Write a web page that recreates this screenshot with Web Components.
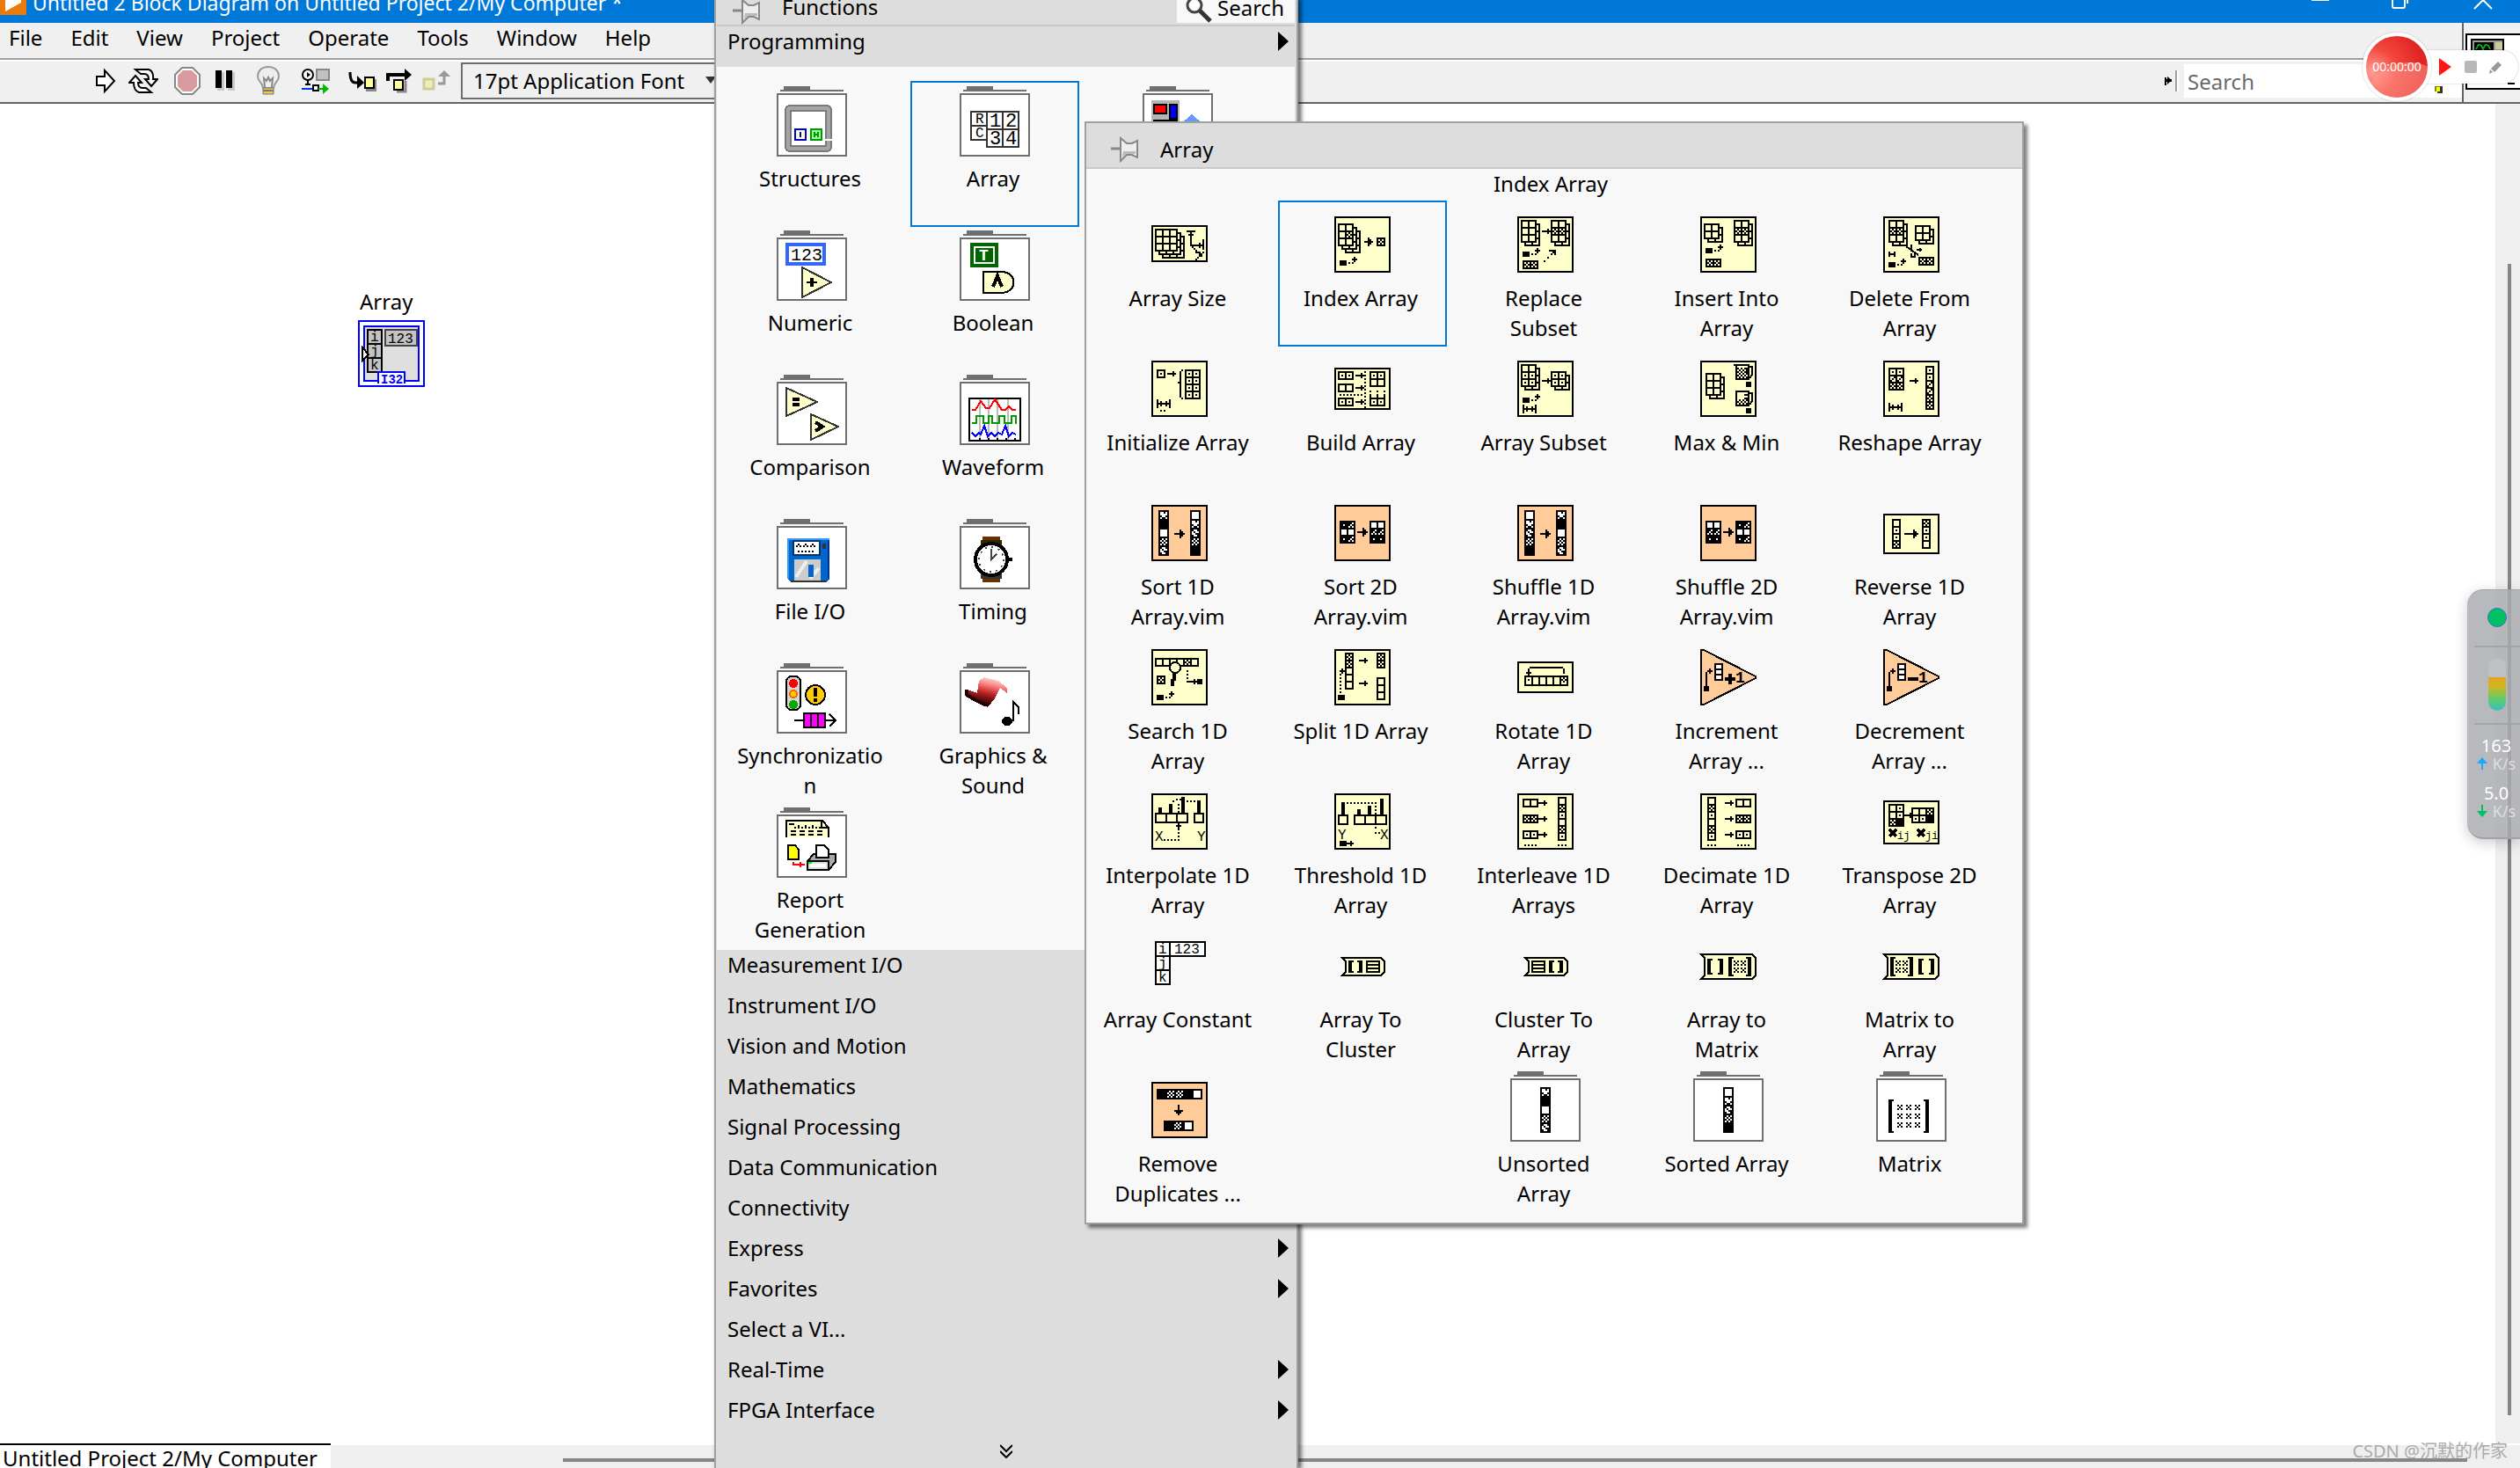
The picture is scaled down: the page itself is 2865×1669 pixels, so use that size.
<!DOCTYPE html>
<html lang="en">
<head>
<meta charset="utf-8">
<title>Block Diagram</title>
<style>
    html, body {
        margin: 0;
        height: 100%;
        overflow: hidden;
    }
    body {
        font: 24px/34px "Noto Sans", "Noto Sans CJK SC", sans-serif;
        color: #000;
        background: #fff;
    }
</style>
</head>
<body>
<diagram-window></diagram-window>
<functions-palette></functions-palette>
<array-palette></array-palette>
<screen-recorder></screen-recorder>
<net-monitor></net-monitor>
<page-credit>CSDN @沉默的作家</page-credit>

<script>
// ---------- icon drawing: one unit is one icon pixel, shown at 2x ----------
const CREAM = '#ffffcc';
const ORANGE = '#ffcc99';
const WHITE = '#ffffff';

const r = (x, y, w, h, fill = '#000') => `<rect x="${x}" y="${y}" width="${w}" height="${h}" fill="${fill}"/>`;
const p = (d, fill = 'none', stroke = '#000', w = 1) => `<path d="${d}" fill="${fill}" stroke="${stroke}" stroke-width="${w}"/>`;
const box = (x, y, w, h, fill, stroke = '#000') => r(x, y, w, h, stroke) + r(x + 1, y + 1, w - 2, h - 2, fill);
const at = (x, y, body) => `<g transform="translate(${x} ${y})">${body}</g>`;
const t = (x, y, size, text, more = '') => `<text x="${x}" y="${y}" font-size="${size}" font-family="Liberation Mono, monospace" ${more}>${text}</text>`;
const dots = (x, y, n, dx, dy) => Array.from({length: n}, (_, i) => r(x + i * dx, y + i * dy, 1, 1)).join('');

// black pixels inside a 3x3 or 4x4 cell
const MARKS = {
    ' ': [],
    '.': ['000', '010', '000'],
    'x': ['010', '101', '010'],
    'n': ['001', '010', '100'],
    'b': ['111', '101', '111'],
    'd': ['110', '101', '010'],
    '#': ['111', '111', '111'],
    'X': ['1010', '0101', '1010', '0101'],
    'N': ['0010', '0000', '1001', '0110'],
    'D': ['1001', '0100', '0011', '1001'],
    'B': ['1111', '1111', '1111', '1111']
};

function grid(x, y, rows, light = CREAM, cw = 4, ch = 4) {
    const cols = rows[0].length;
    let out = r(x, y, cols * cw + 1, rows.length * ch + 1);
    rows.forEach((row, j) => [...row].forEach((mark, i) => {
        const cx = x + i * cw + 1;
        const cy = y + j * ch + 1;
        out += r(cx, cy, cw - 1, ch - 1, light);
        MARKS[mark].forEach((line, b) => [...line].forEach((on, a) => {
            if (on === '1') out += r(cx + a, cy + b, 1, 1);
        }));
    }));
    return out;
}

function stack(x, y, rows, depth = 1) {
    const blank = rows.map(row => ' '.repeat(row.length));
    let out = '';
    for (let k = depth; k > 0; k--) out += grid(x + 2 * k, y + 2 * k, blank);
    return out + grid(x, y, rows);
}

const arrow = (x, y, len = 5) => r(x, y, len, 1) + r(x + len - 2, y - 1, 1, 3);
const bigArrow = (x, y, len = 6) => r(x, y, len, 1) + r(x + len - 3, y - 2, 1, 5) + r(x + len - 2, y - 1, 1, 3);
const index = (x, y) => r(x, y, 4, 3) + r(x + 5, y + 1, 1, 1) + r(x + 7, y + 1, 1, 1) + r(x + 8, y - 2, 1, 3) + r(x + 7, y - 1, 3, 1);
const size = (x, y, w = 8) => r(x, y, 1, 5) + r(x + w - 1, y, 1, 5) + r(x, y + 2, w, 1) + r(x + 2, y + 1, 1, 3) + r(x + w - 3, y + 1, 1, 3);
const node = (body, h = 32, dy = 0, fill = CREAM) => at(4, 6 + dy, box(0, 0, 32, h, fill) + body);
const folder = body => r(4, 0, 15, 2, '#6d706f') + r(2, 2, 36, 1, '#6d706f') + box(0, 4, 40, 36, WHITE, '#6d706f') + body;

const SORTED = [' ', 'N', 'D', 'X', 'B'];
const MIXED = ['N', 'B', ' ', 'X', 'D'];
const col = (x, y, cells) => grid(x, y, cells, WHITE, 5, 5);
const square = (x, y, rows) => grid(x, y, rows, WHITE);
const TABLE_MIXED = ['bd', '  ', 'bd'];
const TABLE_SORTED = ['  ', 'dd', 'bb'];

const brackets = (x, y, gap, h) => r(x, y, 2, h) + r(x, y, 3, 1) + r(x, y + h - 1, 3, 1)
    + r(x + gap - 2, y, 2, h) + r(x + gap - 3, y, 3, 1) + r(x + gap - 3, y + h - 1, 3, 1);
const cross = (x, y) => r(x, y, 1, 1) + r(x + 2, y, 1, 1) + r(x + 1, y + 1, 1, 1) + r(x, y + 2, 1, 1) + r(x + 2, y + 2, 1, 1);
const capsule = (w, h) => p(`M.5 .5H${w - 2.5}L${w - .5} 2.5V${h - 2.5}L${w - 2.5} ${h - .5}H.5L2.5 ${h - 2.5}V2.5Z`, CREAM);
const lines = (x, y) => box(x, y, 8, 7, CREAM) + r(x, y + 2, 8, 1) + r(x, y + 4, 8, 1);
const crosses = (x, y) => brackets(x, y, 13, 11) + cross(x + 3, y + 2) + cross(x + 7, y + 2) + cross(x + 3, y + 6) + cross(x + 7, y + 6);
const step = sign => at(4, 6, p('M.5 .5H2L31.5 15.5V16.5L2 31.5H.5Z', ORANGE)
    + r(2, 21, 3, 3) + r(3, 13, 1, 8) + r(4, 12, 3, 1) + r(5, 11, 1, 3)
    + grid(8, 8, [' ', ' ', ' '], WHITE, 4, 3)
    + r(14, 16, 6, 2) + (sign === '+' ? r(16, 14, 2, 6) : '')
    + t(20, 19, 9, '1', 'font-weight="700"'));
const cup = (x, y, full) => p(`M${x + 8} ${y + 1.5}H${x + 9.5}V${y + 6}L${x + 8} ${y + 8}`) + box(x, y, 8, 9, CREAM)
    + (full ? dots(x + 1, y + 2, 3, 2, 0) + dots(x + 2, y + 3, 3, 2, 0) + dots(x + 1, y + 4, 3, 2, 0) : '')
    + dots(x + 2, y + 5, 3, 2, 0) + dots(x + 1, y + 6, 3, 2, 0) + dots(x + 2, y + 7, 3, 2, 0)
    + r(x + 5, y + 2, 3, 1) + r(x + 5, y + 4, 3, 1);

const ICONS = {
    arraySize: node(stack(2, 2, ['   ', '   ', '   '], 2)
        + r(20, 3, 5, 1) + r(22, 3, 1, 9) + r(21, 5, 3, 1) + r(22, 11, 8, 1) + r(29, 8, 1, 6) + r(27, 10, 1, 3)
        + dots(23, 12, 6, 1, 1) + r(25, 15, 3, 1) + dots(25, 19, 5, 1, -1), 21, 5),
    indexArray: node(stack(2, 4, ['  ', ' x', '  '], 2) + bigArrow(17, 14, 5) + grid(24, 12, ['x']) + index(3, 25)),
    replace: node(stack(2, 2, ['  ', '  ', '  ']) + arrow(14, 8) + stack(19, 2, ['  ', 'xx', '  '])
        + index(3, 20) + grid(3, 25, ['xx']) + dots(15, 25, 3, 2, -2) + r(18, 19, 4, 1) + r(21, 19, 1, 3) + r(20, 20, 1, 1)),
    insert: node(stack(2, 4, ['  ', '  ']) + stack(19, 2, ['  ', 'xx', '  ']) + index(3, 18) + grid(3, 24, ['xx'])),
    remove: node(stack(3, 2, ['  ', 'xx', '  ']) + stack(18, 5, ['  ', '  '])
        + p('M13 17L20 22M16 16V20M19 19H22M16 21V23H18V21M21 20V18') + r(3, 20, 1, 3) + r(6, 20, 1, 3) + r(3, 21, 4, 1)
        + index(3, 26) + grid(20, 23, ['xx'])),
    initialize: node(grid(3, 5, ['.']) + arrow(9, 7) + r(16, 6, 1, 15) + r(17, 5, 1, 1) + r(15, 12, 1, 1) + r(17, 21, 1, 1)
        + grid(19, 5, ['..', '..', '..', '..']) + size(3, 22) + r(5, 28, 1, 1) + r(7, 28, 1, 1)),
    build: node(grid(2, 2, ['..']) + grid(2, 9, ['  ']) + grid(2, 17, ['..']) + arrow(12, 4) + arrow(12, 11) + arrow(12, 19)
        + dots(17, 2, 11, 0, 2) + dots(3, 15, 7, 2, 0) + grid(20, 2, ['..', '  ']) + dots(20, 13, 3, 4, 0) + r(20, 15, 1, 3)
        + r(24, 15, 1, 3) + r(28, 15, 1, 3) + grid(20, 17, ['..']), 24, 4),
    subset: node(stack(2, 2, ['  ', '..', '..']) + arrow(14, 11) + stack(19, 6, ['..', '..']) + index(3, 21) + size(3, 25)),
    maxMin: node(stack(3, 7, ['  ', '  ', '  ']) + cup(20, 2, true) + r(19, 2, 2, 1) + r(26, 12, 3, 3) + cup(20, 17) + r(26, 27, 3, 3)),
    reshape: node(grid(3, 4, ['..', 'nn', 'xx']) + arrow(15, 11) + grid(24, 3, ['.', '.', 'n', 'n', 'x', 'x']) + size(3, 24)),
    sort1: node(col(4, 3, MIXED) + bigArrow(13, 16) + col(22, 3, SORTED), 32, 0, ORANGE),
    sort2: node(square(3, 9, TABLE_MIXED) + bigArrow(13, 15) + square(20, 9, TABLE_SORTED), 32, 0, ORANGE),
    shuffle1: node(col(4, 3, SORTED) + bigArrow(13, 16) + col(22, 3, MIXED), 32, 0, ORANGE),
    shuffle2: node(square(3, 9, TABLE_SORTED) + bigArrow(13, 15) + square(20, 9, TABLE_MIXED), 32, 0, ORANGE),
    reverse: node(grid(5, 3, [' ', '.', '.', 'x']) + bigArrow(12, 11, 8) + grid(22, 3, ['x', '.', '.', ' ']), 23, 5),
    search: node(grid(2, 5, ['    x ']) + '<circle cx="13.5" cy="10.5" r="3" fill="#ffffcc" stroke="#000"/>'
        + r(12, 14, 2, 4) + r(11, 17, 2, 4) + grid(3, 15, ['x']) + dots(20, 12, 4, 0, 2) + arrow(21, 18) + r(26, 17, 3, 3) + index(3, 26)),
    split: node(grid(6, 2, ['x', 'x', ' ', ' ', ' ']) + arrow(14, 6) + arrow(14, 19) + grid(24, 2, ['x', 'x'])
        + grid(24, 16, [' ', ' ', ' ']) + dots(3, 14, 6, 0, 2) + r(3, 12, 3, 1) + r(4, 11, 1, 3) + r(2, 26, 4, 3)),
    rotate: node(r(7, 3, 19, 1) + r(26, 4, 1, 3) + r(6, 4, 1, 4) + r(5, 6, 3, 1) + grid(4, 8, ['.    x'], CREAM, 4, 5), 18, 7),
    increment: step('+'),
    decrement: step('-'),
    interpolate: node(r(4, 8, 2, 3) + r(10, 6, 2, 5) + r(17, 2, 2, 9) + r(26, 4, 2, 7) + grid(2, 11, ['   '], CREAM, 6, 5)
        + grid(24, 11, [' '], CREAM, 5, 5) + r(12, 4, 1, 1) + r(14, 3, 1, 1) + r(16, 3, 1, 1) + dots(20, 4, 3, 2, 0) + dots(15, 6, 3, 0, 2)
        + r(14, 18, 3, 1) + r(15, 17, 1, 3) + dots(15, 20, 4, 0, 2) + dots(7, 26, 4, 2, 0)
        + t(2, 27, 8, 'X') + t(26, 27, 8, 'Y')),
    threshold: node(r(4, 5, 2, 7) + r(13, 9, 2, 3) + r(19, 7, 2, 5) + r(26, 3, 2, 9) + grid(2, 12, [' '], CREAM, 5, 5)
        + grid(11, 12, ['   '], CREAM, 6, 5) + dots(7, 5, 9, 2, 0) + dots(23, 5, 8, 0, 2) + dots(23, 22, 2, 2, 0)
        + t(2, 26, 8, 'Y') + t(26, 26, 8, 'X') + r(3, 27, 4, 3) + r(7, 28, 4, 1) + r(9, 27, 1, 3)),
    interleave: node(grid(3, 3, ['  ']) + grid(3, 12, ['xx']) + grid(3, 21, ['..']) + arrow(12, 5) + arrow(12, 14) + arrow(12, 23)
        + dots(4, 29, 4, 2, 0) + grid(23, 2, [' ', 'x', '.', ' ', 'x', '.']) + dots(23, 29, 3, 2, 0)),
    decimate: node(grid(4, 2, [' ', 'x', '.', ' ', 'x', '.']) + arrow(14, 5) + arrow(14, 14) + arrow(14, 23)
        + grid(20, 3, ['  ']) + grid(20, 12, ['xx']) + grid(20, 21, ['..']) + dots(4, 29, 3, 2, 0) + dots(21, 29, 4, 2, 0)),
    transpose: node(grid(3, 2, [' .', ' .', 'x#']) + arrow(12, 8) + grid(16, 4, ['  x', '..#'])
        + p('M3.5 16.5L7.5 20.5M7.5 16.5L3.5 20.5', 'none', '#000', 2) + p('M19.5 16.5L23.5 20.5M23.5 16.5L19.5 20.5', 'none', '#000', 2)
        + t(8, 22, 6, 'ij') + t(24, 22, 6, 'ji'), 25, 4),
    constant: at(4, 6, box(2, 2, 9, 9, WHITE) + box(2, 10, 9, 9, WHITE) + box(2, 18, 9, 9, WHITE) + box(10, 2, 21, 9, WHITE)
        + t(4, 9, 8, 'i') + t(4, 17, 8, 'j') + t(4, 25, 8, 'k') + t(13, 9, 8, '123')),
    toCluster: at(8, 17, capsule(25, 11) + brackets(4, 2, 8, 7) + lines(14, 2)),
    fromCluster: at(8, 17, capsule(25, 11) + lines(4, 2) + brackets(14, 2, 8, 7)),
    toMatrix: at(4, 15, capsule(32, 15) + brackets(4, 3, 9, 9) + crosses(16, 2)),
    fromMatrix: at(4, 15, capsule(32, 15) + crosses(4, 2) + brackets(20, 3, 9, 9)),
    duplicates: node(r(3, 4, 26, 6) + grid(8, 4, ['XX'], WHITE, 5, 5) + r(24, 5, 4, 4, WHITE)
        + r(15, 13, 1, 6) + r(13, 16, 5, 1) + r(14, 17, 3, 1)
        + r(7, 22, 17, 6) + grid(12, 22, ['X'], WHITE, 5, 5) + r(19, 23, 4, 4, WHITE), 32, 0, ORANGE),
    unsorted: folder(col(17, 9, MIXED)),
    sorted: folder(col(17, 9, SORTED)),
    matrix: folder(r(7, 16, 2, 19) + r(7, 16, 3, 1) + r(7, 34, 3, 1) + r(28, 16, 2, 19) + r(27, 16, 3, 1) + r(27, 34, 3, 1)
        + [12, 17, 22].map(x => [19, 24, 29].map(y => cross(x, y)).join('')).join('')),

    structures: folder('<rect x="6.500" y="12.500" width="23" height="23" rx="1" fill="none" stroke="#7b7b7b" stroke-width="4"/><rect x="6.500" y="12.500" width="23" height="23" rx="1" fill="none" stroke="#a5a5a5" stroke-width="2"/>'
        + box(10, 24, 7, 7, CREAM, '#0000cc') + r(13, 26, 1, 3, '#0000cc') + box(19, 24, 7, 7, '#99ff99', '#009900')
        + r(21, 26, 1, 3, '#009900') + r(23, 26, 1, 3, '#009900') + r(22, 27, 1, 1, '#009900') + r(27, 30, 5, 1, WHITE)),
    array: folder(box(6, 14, 10, 9, WHITE, '#333') + box(6, 22, 10, 9, WHITE, '#333') + box(15, 14, 10, 11, WHITE, '#333') + box(24, 14, 10, 11, WHITE, '#333')
        + box(15, 24, 10, 11, WHITE, '#333') + box(24, 24, 10, 11, WHITE, '#333')
        + t(9, 21, 8, 'R') + t(9, 29, 8, 'C') + t(17, 23, 11, '1') + t(26, 23, 11, '2') + t(17, 33, 11, '3') + t(26, 33, 11, '4')),
    cluster: folder(r(5, 8, 16, 14, '#b5b5b5') + box(6, 10, 8, 6, '#f00') + box(15, 10, 5, 9, '#00f') + r(6, 19, 14, 1) + p('M21 22L28 16L35 22Z', '#6699ff', 'none')),
    numeric: folder(r(5, 7, 23, 13, '#3366ff') + r(7, 9, 19, 9, WHITE) + t(8, 17, 10, '123')
        + p('M14.500 21V38L31 29.500Z', CREAM, '#333') + r(17, 29, 6, 1) + r(19, 27, 2, 5)),
    boolean: folder(r(6, 7, 16, 14, '#006600') + box(8, 9, 12, 10, '#006600', WHITE) + t(11, 17, 9, 'T', 'fill="#fff" font-weight="700"')
        + p('M13.500 23.500H24C33 24 33 35 24 35.500H13.500Z', CREAM) + p('M19 32L21.500 26L24 32', 'none', '#000', 2)),
    comparison: folder(p('M5.500 7.500V23.500L23 15.500Z', CREAM, '#333') + r(9, 13, 4, 2) + r(9, 16, 4, 2)
        + p('M19.500 22.500V37L35 29.500Z', CREAM, '#333') + p('M22 27L26 29.500L22 32', 'none', '#000', 2)),
    waveform: folder(box(5, 13, 30, 25, WHITE) + [11, 16, 21, 27].map(x => r(x, 14, 1, 23, '#bbb')).join('')
        + p('M7 20H9L12 15L15 19H17L20 14L24 20H26L28 18L30 20H32', 'none', '#f00')
        + p('M7 27.500H9.500V23.500H13.500V27.500H16.500V23.500H18.500V27.500H22.500V23.500H25.500V27.500H29.500V23.500H32V28', 'none', '#090')
        + p('M7 33L9 35L11 33L12 34L14 29L16 35L18 33L20 35L22 33L24 34L26 29L28 35L30 33L32 34', 'none', '#00f')
        + dots(11, 36, 5, 5, 0)),
    file: folder(p('M6 11H30V34L28 36H8L6 34Z', '#0066cc', 'none') + r(6, 11, 24, 1, '#3399ff') + r(6, 11, 1, 23, '#3399ff') + r(29, 12, 1, 22, '#003399')
        + box(9, 12, 16, 9, WHITE, '#003366') + dots(11, 15, 6, 2, 0) + dots(12, 14, 3, 4, 0) + dots(12, 18, 5, 2, 0) + r(26, 14, 2, 3, '#333')
        + r(10, 23, 15, 12, '#ccc') + p('M11 33L17 24M19 34L24 28', 'none', '#eee', 2) + r(18, 26, 3, 7, '#0066cc') + r(8, 35, 20, 1, '#333')),
    timing: folder(r(13, 10, 10, 2, '#663300') + r(12, 12, 12, 3, '#332200') + r(12, 31, 12, 3, '#333') + r(13, 34, 10, 2, '#663300') + r(26, 22, 4, 2)
        + '<circle cx="18" cy="23" r="9" fill="#fff" stroke="#000" stroke-width="2"/><circle cx="18" cy="23" r="7" fill="none" stroke="#444" stroke-dasharray="1 2.665"/>'
        + p('M18 17V23L21 20', 'none', '#444')),
    sync: folder('<rect x="5.500" y="7.500" width="8" height="19" rx="3" fill="#d5d5d5" stroke="#000"/>'
        + '<circle cx="9.500" cy="11.500" r="2.500" fill="#f00"/><circle cx="9.500" cy="17.500" r="2" fill="#fc0" stroke="#f60"/><circle cx="9.500" cy="23.500" r="2.500" fill="#0a0"/>'
        + '<circle cx="22" cy="18" r="5.500" fill="#fc0" stroke="#000"/>' + r(21, 14, 2, 5) + r(21, 20, 2, 2)
        + r(10, 32, 24, 1) + box(15, 28, 13, 9, '#f0f') + r(19, 28, 1, 9) + r(23, 28, 1, 9) + p('M30 29L33.500 32.500L30 36')),
    graphics: folder('<defs><linearGradient id="roll" x1=".7" y1="0" x2=".4" y2="1"><stop offset="0" stop-color="#eee"/><stop offset=".25" stop-color="#f88"/><stop offset=".55" stop-color="#b22"/><stop offset=".9" stop-color="#200"/></linearGradient></defs>'
        + p('M4 15L10 17L11 10L14 8L22 10L27 14V17L23 14L20 20L16 25L9 22L4 19Z', 'url(#roll)', 'none') + p('M4 15V18L9 21L15 24', 'none', '#200', 2)
        + '<ellipse cx="27" cy="33" rx="3" ry="2.500"/>' + p('M30.500 33V22L33.500 25V29', 'none', '#000', 1)),
    report: folder(p('M5.500 17V7.500H26L29.500 11.500V17', CREAM) + p('M25.500 8V11.500H29') + r(7, 9, 3, 1) + dots(10, 11, 8, 2, 0) + dots(12, 10, 3, 4, 0)
        + [8, 13, 18, 23].map(x => r(x, 13, 3, 1) + r(x, 15, 3, 1)).join('')
        + p('M6.500 21.500H10.500L12.500 24V29.500H6.500Z', '#ff0') + r(9, 32, 7, 1, '#f00') + r(9, 31, 1, 1, '#f00') + r(13, 31, 1, 3, '#f00')
        + p('M17.500 30.500L21 26.500H33.500V31L29.500 35.500H17.500Z', '#aaa') + box(17, 30, 13, 6, '#ddd') + r(19, 32, 9, 2, '#fff') + r(18, 31, 2, 1, '#0f0')
        + p('M22.500 28.500V21.500H27L29.500 24V28.500Z', WHITE)),

    // item dropped on the diagram
    dropped: box(0, 0, 38, 38, WHITE, '#00f') + box(3, 3, 32, 32, '#dedede', '#00f')
        + box(5, 5, 9, 9, '#c3c3c3') + box(5, 13, 9, 9, '#c3c3c3') + box(5, 21, 9, 9, '#c3c3c3') + box(15, 5, 19, 10, '#c3c3c3', '#444')
        + t(7, 12, 8, 'i') + t(7, 20, 8, 'j') + t(7, 28, 8, 'k') + t(17, 13, 8, '123')
        + box(11, 29, 16, 7, WHITE, '#00f') + r(12, 34, 14, 2, WHITE) + t(13, 36, 7, 'I32', 'fill="#00f" font-weight="700"')
        + p('M2.500 15.500L6 19.500L2.500 23Z', WHITE)
};
const svg = (name, units = 40) => `<svg width="${units * 2}" height="${units * 2}" viewBox="0 0 ${units} ${units}" shape-rendering="crispEdges" aria-hidden="true">${ICONS[name]}</svg>`;

const RESET = `
    * { box-sizing: border-box; }
    button, input, select { font: inherit; color: inherit; border: 0; margin: 0; padding: 0; background: none; border-radius: 0; }
    svg { display: block; flex: none; }
`;

const PIN = `<svg width="32" height="30" viewBox="0 0 32 30" aria-hidden="true">
    <path d="M0 14H11" stroke="#888" stroke-width="3"/>
    <path d="M11 2L18 8H24L30 5V24L24 21H18L11 28Z" fill="#eee" stroke="#888" stroke-width="2"/>
    <path d="M14 17H28V20L18 20L13 24Z" fill="#bbb"/></svg>`;

// ---------- palette tile ----------
class PaletteTile extends HTMLElement {
    constructor() {
        super();
        this.attachShadow({mode: 'open'});
    }
    connectedCallback() {
        this.shadowRoot.innerHTML = `
        <style>${RESET}
            :host { display: block; }
            button {
                display: flex;
                flex-direction: column;
                align-items: center;
                width: 100%;
                height: 166px;
                padding-top: 4px;
                gap: 8px;
                border: 2px solid transparent;
            }
            :host([selected]) button { border-color: #0078d7; }
            span {
                width: 174px;
                padding-right: 4px;
                line-height: 34px;
                white-space: pre-line;
                overflow-wrap: anywhere;
                text-align: center;
            }
        </style>
        <button type="button">${svg(this.getAttribute('icon'))}<span><slot></slot></span></button>`;
    }
}
customElements.define('palette-tile', PaletteTile);

const tiles = items => items.map(item => item
    ? `<palette-tile icon="${item[0]}" ${item[2] ? 'selected' : ''}>${item[1]}</palette-tile>`
    : '<i></i>').join('');

// ---------- category row ----------
class CategoryRow extends HTMLElement {
    constructor() {
        super();
        this.attachShadow({mode: 'open'}).innerHTML = `
        <style>${RESET}
            :host { display: block; background: #ddd; }
            button {
                display: flex;
                justify-content: space-between;
                align-items: flex-start;
                width: 100%;
                height: 46px;
                padding: 0 7px 0 12px;
                text-align: left;
            }
            svg { margin-top: 6px; visibility: hidden; }
            :host([more]) svg { visibility: visible; }
        </style>
        <button type="button"><slot></slot><svg width="12" height="22"><path d="M0 0L12 11L0 22Z"/></svg></button>`;
    }
}
customElements.define('category-row', CategoryRow);

// ---------- functions palette ----------
class FunctionsPalette extends HTMLElement {
    constructor() {
        super();
        this.attachShadow({mode: 'open'}).innerHTML = `
        <style>${RESET}
            :host {
                position: absolute;
                left: 812px;
                top: 0;
                bottom: 0;
                width: 664px;
                display: flex;
                flex-direction: column;
                background: #ddd;
                border: solid #a0a0a0;
                border-width: 0 2px;
                box-shadow: 3px 0 4px 1px rgba(0, 0, 0, .5);
                box-sizing: border-box;
                padding: 0 2px 0 1px;
            }
            header {
                display: flex;
                align-items: flex-end;
                height: 30px;
                padding-left: 18px;
                border-bottom: 2px solid #c8c8c8;
                overflow: hidden;
            }
            header span { flex: 1; padding: 0 0 3px 24px; }
            .find {
                display: flex;
                align-items: flex-end;
                gap: 6px;
                height: 26px;
                width: 134px;
                padding: 0 0 0 10px;
                margin-bottom: 2px;
                background: #f8f8f8;
            }
            .grid {
                display: grid;
                grid-template-columns: repeat(3, 192px);
                grid-auto-rows: 164px;
                column-gap: 16px;
                padding: 16px 12px 4px;
                background: #f8f8f8;
            }
            .down { display: block; margin: 10px auto 0; }
        </style>
        <header>${PIN}<span>Functions</span>
            <button class="find" type="button"><svg width="30" height="30" viewBox="0 0 30 30"><circle cx="10" cy="10" r="8" fill="#fff" stroke="#444" stroke-width="3"/><path d="M16 16L28 28" stroke="#333" stroke-width="5"/></svg>Search</button>
        </header>
        <category-row more>Programming</category-row>
        <div class="grid">${tiles([
            ['structures', 'Structures'], ['array', 'Array', true], ['cluster', ''],
            ['numeric', 'Numeric'], ['boolean', 'Boolean'], null,
            ['comparison', 'Comparison'], ['waveform', 'Waveform'], null,
            ['file', 'File I/O'], ['timing', 'Timing'], null,
            ['sync', 'Synchronization'], ['graphics', 'Graphics &amp;\nSound'], null,
            ['report', 'Report\nGeneration'], null, null
        ])}</div>
        <category-row>Measurement I/O</category-row>
        <category-row>Instrument I/O</category-row>
        <category-row>Vision and Motion</category-row>
        <category-row>Mathematics</category-row>
        <category-row>Signal Processing</category-row>
        <category-row>Data Communication</category-row>
        <category-row>Connectivity</category-row>
        <category-row more>Express</category-row>
        <category-row more>Favorites</category-row>
        <category-row>Select a VI...</category-row>
        <category-row more>Real-Time</category-row>
        <category-row more>FPGA Interface</category-row>
        <button class="down" type="button" aria-label="More"><svg width="14" height="16"><path d="M0 1L7 8L14 1M0 8L7 15L14 8" fill="none" stroke="#000" stroke-width="2"/></svg></button>`;
    }
}
customElements.define('functions-palette', FunctionsPalette);

// ---------- array palette ----------
class ArrayPalette extends HTMLElement {
    constructor() {
        super();
        this.attachShadow({mode: 'open'}).innerHTML = `
        <style>${RESET}
            :host {
                position: absolute;
                left: 1233px;
                top: 138px;
                background: #f8f8f8;
                border: 2px solid #a0a0a0;
                box-shadow: 4px 4px 4px rgba(0, 0, 0, .5);
            }
            header {
                display: flex;
                align-items: center;
                height: 52px;
                padding: 10px 0 0 28px;
                gap: 24px;
                background: #ddd;
                border-bottom: 2px solid #c8c8c8;
            }
            h2 { margin: 0; padding-right: 8px; font: inherit; text-align: center; height: 36px; }
            .grid {
                display: grid;
                grid-template-columns: repeat(5, 192px);
                grid-auto-rows: 164px;
                column-gap: 16px;
                padding: 0 30px 14px 10px;
            }
        </style>
        <header>${PIN}<span>Array</span></header>
        <h2>Index Array</h2>
        <div class="grid">${tiles([
            ['arraySize', 'Array Size'], ['indexArray', 'Index Array', true], ['replace', 'Replace\nSubset'], ['insert', 'Insert Into\nArray'], ['remove', 'Delete From\nArray'],
            ['initialize', 'Initialize Array'], ['build', 'Build Array'], ['subset', 'Array Subset'], ['maxMin', 'Max &amp; Min'], ['reshape', 'Reshape Array'],
            ['sort1', 'Sort 1D\nArray.vim'], ['sort2', 'Sort 2D\nArray.vim'], ['shuffle1', 'Shuffle 1D\nArray.vim'], ['shuffle2', 'Shuffle 2D\nArray.vim'], ['reverse', 'Reverse 1D\nArray'],
            ['search', 'Search 1D\nArray'], ['split', 'Split 1D Array'], ['rotate', 'Rotate 1D\nArray'], ['increment', 'Increment\nArray ...'], ['decrement', 'Decrement\nArray ...'],
            ['interpolate', 'Interpolate 1D\nArray'], ['threshold', 'Threshold 1D\nArray'], ['interleave', 'Interleave 1D\nArrays'], ['decimate', 'Decimate 1D\nArray'], ['transpose', 'Transpose 2D\nArray'],
            ['constant', 'Array Constant'], ['toCluster', 'Array To\nCluster'], ['fromCluster', 'Cluster To\nArray'], ['toMatrix', 'Array to\nMatrix'], ['fromMatrix', 'Matrix to\nArray'],
            ['duplicates', 'Remove\nDuplicates ...'], null, ['unsorted', 'Unsorted\nArray'], ['sorted', 'Sorted Array'], ['matrix', 'Matrix']
        ])}</div>`;
    }
}
customElements.define('array-palette', ArrayPalette);

// ---------- main window ----------
class DiagramToolbar extends HTMLElement {
    constructor() {
        super();
        this.attachShadow({mode: 'open'}).innerHTML = `
        <style>${RESET}
            :host {
                display: flex;
                align-items: center;
                justify-content: space-between;
                flex: 1;
                padding-left: 108px;
            }
            div { display: flex; align-items: center; }
            .tools { gap: 24px; }
            .run { gap: 14px; }
            .run .stop { margin-left: 4px; }
            .steps { gap: 11px; }
            select {
                appearance: none;
                width: 300px;
                height: 42px;
                padding-left: 12px;
                border: 2px solid #6e6e6e;
                background: #f0f0f0;
            }
            .font { position: relative; margin-left: -12px; }
            .font svg { position: absolute; left: 278px; top: 16px; }
            input { width: 316px; height: 38px; padding-left: 4px; background: #fff; }
            input::placeholder { color: #6b6b6b; opacity: 1; }
            .search svg { margin-right: 6px; }
        </style>
        <div class="tools">
            <div class="run">
                <button type="button" aria-label="Run"><svg width="24" height="30" viewBox="0 0 24 30"><path d="M2 10H11V3L22 15L11 27V20H2Z" fill="#fff" stroke="#000" stroke-width="2"/></svg></button>
                <button type="button" aria-label="Run Continuously"><svg width="34" height="30" viewBox="0 0 34 30"><path d="M8 2H23Q29 4 28 13H33L26 21L19 13H23Q23 7 18 7H14ZM26 28H12Q6 26 6 17H1L8 9L15 17H11Q11 23 16 23H20Z" fill="#fff" stroke="#000" stroke-width="2"/></svg></button>
                <button type="button" class="stop" aria-label="Abort"><svg width="30" height="32" viewBox="0 0 30 32"><path d="M9 1H21L29 9V23L21 31H9L1 23V9Z" fill="#fff" stroke="#888" stroke-width="2"/><path d="M10 4H20L26 10V22L20 28H10L4 22V10Z" fill="#d99a9e"/></svg></button>
                <button type="button" aria-label="Pause"><svg width="26" height="26" viewBox="0 0 26 26"><path d="M5 3H13V24H5ZM17 3H25V24H17Z" fill="#c8c8c8"/><path d="M3 1H10V21H3ZM15 1H22V21H15Z"/></svg></button>
            </div>
            <button type="button" aria-label="Highlight Execution"><svg width="26" height="34" viewBox="0 0 26 34"><path d="M13 1C5 1 1 6 1 12C1 18 7 19 7 25H19C19 19 25 18 25 12C25 6 21 1 13 1Z" fill="#eee" stroke="#999" stroke-width="2"/><path d="M9 24L8 14L11 17L13 13L15 17L18 14L17 24" fill="none" stroke="#888" stroke-width="2"/><path d="M7 25H19V32H7Z" fill="#e9c64d" stroke="#777"/><path d="M7 28H19" stroke="#777" stroke-width="2"/></svg></button>
            <button type="button" aria-label="Retain Wire Values"><svg width="30" height="30" viewBox="0 0 30 30" overflow="visible"><circle cx="8" cy="8" r="6" fill="#fff" stroke="#000" stroke-width="2"/><path d="M7 5V11L11 8Z"/><rect x="18" y="2" width="14" height="12" fill="#c0c0c0" stroke="#888" stroke-width="2"/><path d="M8 14V20M5 19H11" stroke="#000" stroke-width="2"/><path d="M1 24H14" stroke="#0033ff" stroke-width="2"/><rect x="14" y="20" width="6" height="6" fill="#fff" stroke="#000" stroke-width="2"/><path d="M20 24H26" stroke="#0a0" stroke-width="2"/><path d="M25 18L32 24L25 30Z" fill="#0b0"/></svg></button>
            <div class="steps">
                <button type="button" aria-label="Step Into"><svg width="32" height="24" viewBox="0 0 32 24"><path d="M2 2Q2 14 8 14H12" fill="none" stroke="#000" stroke-width="3"/><path d="M10 6L18 14L10 21Z"/><path d="M22 10H32V24H20V22Z" fill="#888"/><rect x="19" y="8" width="10" height="12" fill="#ffff99" stroke="#000" stroke-width="2"/></svg></button>
                <button type="button" aria-label="Step Over"><svg width="30" height="28" viewBox="0 0 30 28"><path d="M2 14V7H22" fill="none" stroke="#000" stroke-width="4"/><path d="M21 0L29 7L21 14Z"/><path d="M12 26H22V14" fill="none" stroke="#888" stroke-width="3"/><rect x="9" y="13" width="10" height="11" fill="#ffff99" stroke="#000" stroke-width="2"/></svg></button>
                <button type="button" aria-label="Step Out"><svg width="32" height="26" viewBox="0 0 32 26"><rect x="2" y="11" width="11" height="11" fill="#eeeebb" stroke="#cccc99" stroke-width="3"/><path d="M18 16H25V6" fill="none" stroke="#999" stroke-width="3"/><path d="M18 8L25 1L32 8Z" fill="#999"/></svg></button>
            </div>
            <div class="font"><select aria-label="Font"><option>17pt Application Font</option></select><svg width="12" height="8"><path d="M0 0H12L6 8Z" fill="#333"/></svg></div>
        </div>
        <div class="search">
            <svg width="16" height="26"><path d="M0 9H2V11H8V14H2V18H0Z"/><path d="M3 8L8 12L3 17Z"/><path d="M13 1V25" stroke="#a0a0a0" stroke-width="2"/><path d="M15 1V25" stroke="#fff" stroke-width="2"/></svg>
            <input type="search" aria-label="Search" placeholder="Search">
        </div>`;
    }
}
customElements.define('diagram-toolbar', DiagramToolbar);

class DiagramWindow extends HTMLElement {
    constructor() {
        super();
        this.attachShadow({mode: 'open'}).innerHTML = `
        <style>${RESET}
            :host { display: flex; flex-direction: column; height: 100vh; background: #fff; }
            .title {
                display: flex;
                align-items: flex-end;
                height: 26px;
                overflow: hidden;
                color: #fff;
                background: #0078d7;
            }
            .title span { flex: 1; padding: 0 0 6px 7px; font-size: 23px; }
            .title svg { align-self: flex-start; }
            .bars { display: flex; height: 92px; background: #f0f0f0; border-bottom: 2px solid #646464; }
            .left { flex: 1; display: flex; flex-direction: column; }
            nav { display: flex; align-items: flex-start; gap: 32px; height: 42px; padding-left: 10px; border-bottom: 2px solid #a0a0a0; box-shadow: 0 2px #fff; }
            .vi { width: 66px; padding: 12px 0 0 2px; border-left: 2px solid #646464; overflow: hidden; }
            .work { flex: 1; display: flex; min-height: 0; }
            .canvas { flex: 1; position: relative; }
            .item { position: absolute; left: 407px; top: 208px; display: grid; gap: 4px; }
            .item span { padding-left: 2px; }
            .vscroll { width: 28px; background: #efefef; padding: 182px 10px 32px 14px; }
            .vscroll i, .hscroll i { display: block; background: #868686; }
            .vscroll i { height: 100%; }
            footer { display: flex; height: 28px; background: #fff; }
            footer span { border-top: 2px solid #000; padding: 0 4px 0 3px; line-height: 30px; width: 376px; white-space: nowrap; }
            .hscroll { flex: 1; background: #efefef; margin-top: 2px; padding: 15px 60px 0 264px; }
            .hscroll i { height: 4px; }
        </style>
        <div class="title">
            <svg width="30" height="17"><path d="M0 0H30V17H0Z" fill="#e87b0c"/><path d="M6 0H24V3L6 13Z" fill="#fff"/></svg>
            <span>Untitled 2 Block Diagram on Untitled Project 2/My Computer *</span>
            <svg width="250" height="12" viewBox="0 0 250 12" fill="none" stroke="#fff" stroke-width="2"><path d="M13 0H33M105 0V7Q105 9 107 9H117Q119 9 119 7V0M122 0V4M198 10L208 0L218 10"/></svg>
        </div>
        <div class="bars">
            <div class="left">
                <nav>
                    <button type="button">File</button><button type="button">Edit</button><button type="button">View</button><button type="button">Project</button>
                    <button type="button">Operate</button><button type="button">Tools</button><button type="button">Window</button><button type="button">Help</button>
                </nav>
                <diagram-toolbar></diagram-toolbar>
            </div>
            <div class="vi"><svg width="64" height="64" viewBox="0 0 32 32" shape-rendering="crispEdges"><path d="M0 0H32V32H0Z"/><path d="M1 1H32V31H1Z" fill="#fff"/><path d="M3 3H22V14H3Z"/><path d="M4 4H21V13H4Z" fill="#999"/><path d="M5 5H16V13H5Z"/><path d="M6 9Q8 4 10 9Q12 4 14 9" fill="none" stroke="#0a0"/><path d="M17 5H21V9H17Z" fill="#cc9"/><path d="M24 28H28V29H24Z"/></svg></div>
        </div>
        <div class="work">
            <div class="canvas"><div class="item"><span>Array</span>${svg('dropped', 38)}</div></div>
            <div class="vscroll"><i></i></div>
        </div>
        <footer><span>Untitled Project 2/My Computer</span><div class="hscroll"><i></i></div></footer>`;
    }
}
customElements.define('diagram-window', DiagramWindow);

// ---------- floating overlays ----------
class ScreenRecorder extends HTMLElement {
    constructor() {
        super();
        this.attachShadow({mode: 'open'}).innerHTML = `
        <style>${RESET}
            :host { position: absolute; top: 37px; right: 2px; display: flex; align-items: center; }
            .dial {
                display: grid;
                place-items: center;
                width: 78px;
                height: 78px;
                border: 4px solid #fff;
                border-radius: 50%;
                box-shadow: 0 0 2px rgba(0, 0, 0, .3);
                background: radial-gradient(circle at 70% 120%, rgba(255, 160, 150, .5) 55%, transparent 56%), radial-gradient(circle at 10% 58%, #ff9f98, #f4483f 36%, #e02522 78%);
                color: #fff;
                font-size: 14px;
                z-index: 1;
            }
            .bar {
                display: flex;
                align-items: center;
                justify-content: space-between;
                width: 119px;
                height: 38px;
                margin-left: -20px;
                padding: 0 18px 0 29px;
                background: #fff;
                border-radius: 0 19px 19px 0;
                box-shadow: 0 0 2px rgba(0, 0, 0, .3);
            }
            .tip { position: absolute; left: 81px; top: 59px; }
        </style>
        <svg class="tip" width="12" height="12"><path d="M4 2H10V10H4Z" fill="#333"/><path d="M1 2H7V8H1Z" fill="#880"/><path d="M3 3H7V8H3Z" fill="#ff0"/></svg>
        <button class="dial" type="button">00:00:00</button>
        <div class="bar">
            <button type="button" aria-label="Start"><svg width="14" height="20"><path d="M0 0L14 10L0 20Z" fill="#ff1414"/></svg></button>
            <button type="button" aria-label="Stop"><svg width="14" height="14"><rect width="14" height="14" rx="2" fill="#b8b8b8"/></svg></button>
            <button type="button" aria-label="Draw"><svg width="15" height="15"><path d="M0 15L1 10L4 13ZM2 9L10 1L14 5L6 13Z" fill="#999"/></svg></button>
        </div>`;
    }
}
customElements.define('screen-recorder', ScreenRecorder);

class NetMonitor extends HTMLElement {
    constructor() {
        super();
        this.attachShadow({mode: 'open'}).innerHTML = `
        <style>${RESET}
            :host {
                position: absolute;
                top: 670px;
                right: 0;
                width: 60px;
                height: 284px;
                padding-left: 8px;
                border: solid #a2a3a6;
                border-width: 1px 0 2px;
                border-radius: 18px 0 0 18px;
                background: rgba(170, 171, 176, .84);
                box-shadow: 0 4px 16px rgba(0, 0, 0, .2);
                box-sizing: border-box;
                color: #fff;
            }
            .dot { width: 22px; height: 22px; margin: 20px 0 21px 15px; border: 1px solid #3a6fd0; border-radius: 50%; background: #00c063; }
            .gauge {
                width: 20px;
                height: 60px;
                border-radius: 10px;
                background: linear-gradient(transparent 22px, #e3a51e 22px, #d3b51c 32px, #66cc66 46px, #35bfc4) #bfc0c3;
            }
            .meter { padding: 12px 0 14px 16px; border: solid #9ea6a9; border-width: 2px 0; }
            .rate { display: grid; justify-items: center; padding-right: 2px; font-size: 20px; line-height: 20px; margin-top: 14px; }
            .unit { display: flex; align-items: center; gap: 6px; font-size: 18px; line-height: 20px; color: #dddee0; }
        </style>
        <div class="dot"></div>
        <div class="meter"><div class="gauge"></div></div>
        <div class="rate">163<span class="unit"><svg width="12" height="14"><path d="M0 7L6 0L12 7H7V14H5V7Z" fill="#18a8ff"/></svg>K/s</span></div>
        <div class="rate">5.0<span class="unit"><svg width="12" height="14"><path d="M0 7L6 14L12 7H7V0H5V7Z" fill="#00c063"/></svg>K/s</span></div>`;
    }
}
customElements.define('net-monitor', NetMonitor);

class PageCredit extends HTMLElement {
    constructor() {
        super();
        this.attachShadow({mode: 'open'}).innerHTML = `
        <style>
            :host { position: absolute; right: 14px; bottom: 2px; font-size: 20px; color: #aaa; }
        </style>
        <slot></slot>`;
    }
}
customElements.define('page-credit', PageCredit);
</script>
</body>
</html>
